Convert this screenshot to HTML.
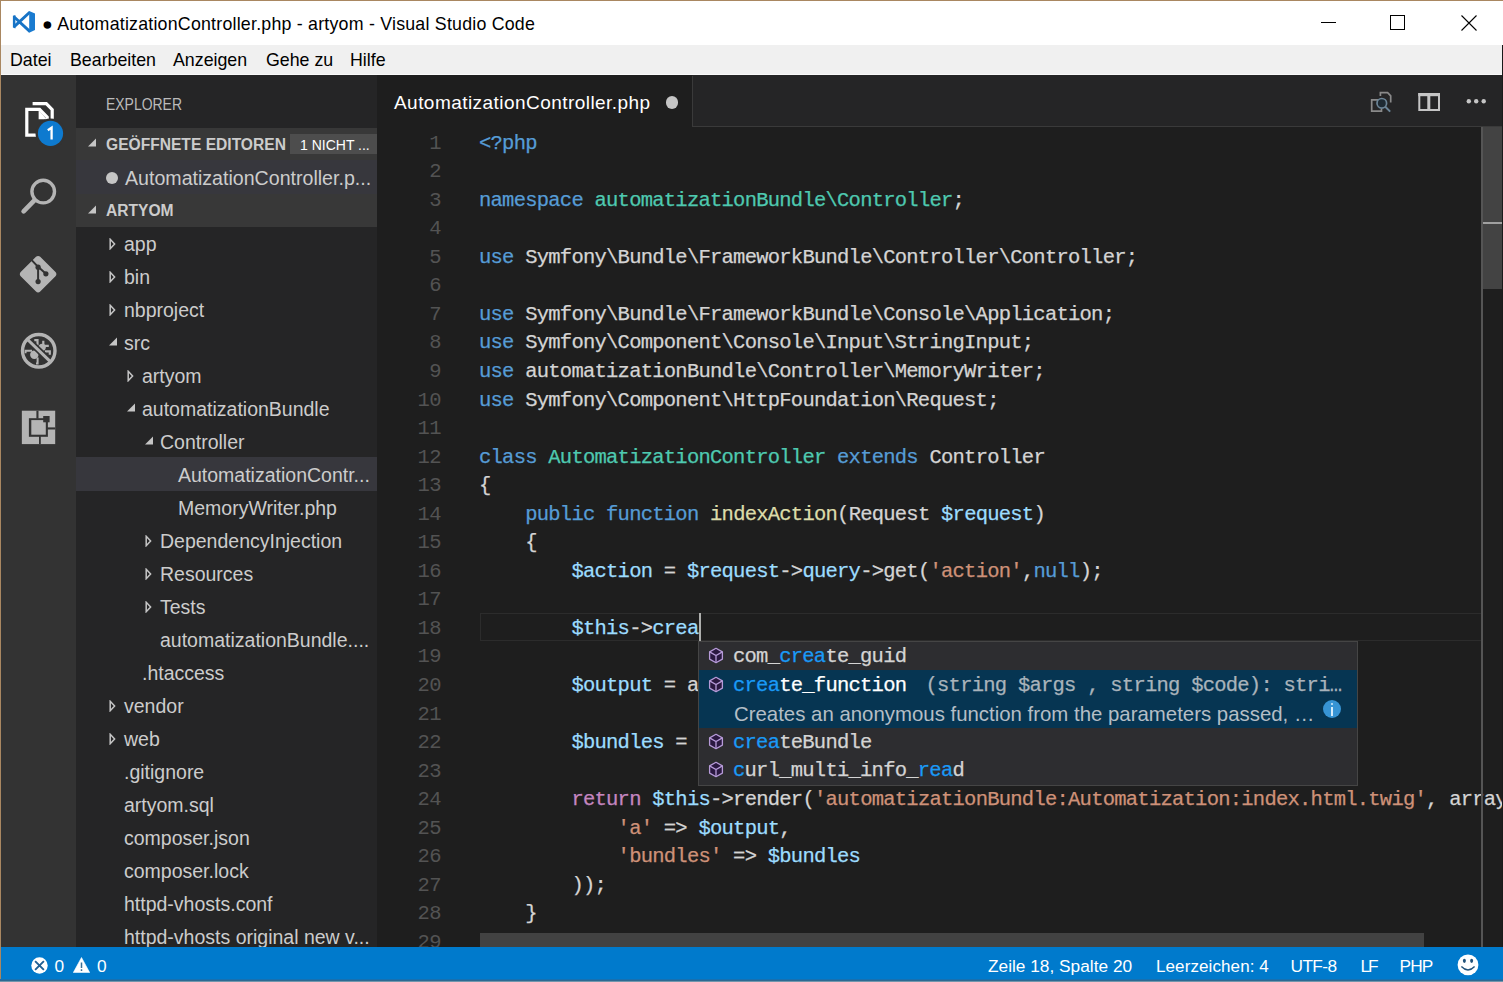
<!DOCTYPE html>
<html><head><meta charset="utf-8">
<style>
*{margin:0;padding:0;box-sizing:border-box}
html,body{width:1503px;height:982px;overflow:hidden;background:#1e1e1e}
body{position:relative;font-family:"Liberation Sans",sans-serif}
.a{position:absolute;white-space:pre;line-height:1}
#border-top{left:0;top:0;width:1503px;height:1px;background:#a98761}
#border-left{left:0;top:0;width:1px;height:982px;background:#a98761}
#titlebar{left:1px;top:1px;width:1502px;height:44px;background:#fff}
#menubar{left:1px;top:45px;width:1502px;height:29px;background:#f0f0f0}
#menuline{left:1px;top:74px;width:1502px;height:1px;background:#fafafa}
.title{font-size:17.8px;color:#000;letter-spacing:0.22px}
.menu{font-size:17.8px;color:#000;top:51.9px}
#activity{left:1px;top:75px;width:75px;height:872px;background:#333333}
#sidebar{left:76px;top:75px;width:301px;height:872px;background:#252526}
#editor{left:377px;top:75px;width:1125px;height:872px;background:#1e1e1e}
#tabbar{left:377px;top:75px;width:1125px;height:52px;background:#252526}
#tab{left:377px;top:75px;width:315px;height:52px;background:#1e1e1e}
#tabborder{left:692px;top:76px;width:1px;height:51px;background:#3a3a3a}
#tabline{left:693px;top:126px;width:809px;height:1px;background:#3a3a3a}
#statusbar{left:1px;top:947px;width:1502px;height:33px;background:#007acc}
#statusbottom{left:0;top:979px;width:1503px;height:3px;background:linear-gradient(#1770b0 0,#1770b0 1px,#2d6a92 1px,#2d6a92 2px,#7196ad 2px)}
.sb{font-size:17.5px;color:#fff;top:955px}
.sbtitle{font-size:16.2px;color:#bbbbbb;transform:scaleX(0.862);transform-origin:0 0}
.hdr{left:76px;width:301px;height:33px;background:#383838}
.hdrt{font-size:15.6px;font-weight:bold;color:#cccccc}
.item{font-size:19.5px;color:#cccccc;left:0;height:33px;line-height:33px}
.code{font-family:"Liberation Mono",monospace;font-size:20.5px;letter-spacing:-0.753px;color:#d4d4d4;line-height:28.54px;-webkit-text-stroke:0.25px currentColor}
.ln{font-family:"Liberation Mono",monospace;font-size:20.5px;letter-spacing:-0.753px;color:#535353;text-align:right;line-height:28.54px}
.k{color:#569cd6}.c{color:#4ec9b0}.f{color:#dcdcaa}.v{color:#9cdcfe}.s{color:#ce9178}.p{color:#c586c0}
</style></head><body>
<div class="a" id="border-top"></div>
<div class="a" id="border-left"></div>
<div class="a" id="titlebar"></div>
<div class="a" id="menubar"></div>
<div class="a" id="menuline"></div>

<!-- title -->
<svg class="a" style="left:0px;top:0px" width="40" height="40" viewBox="0 0 40 40">
<path d="M14.2 17 L30 31.6 M14.2 26.6 L30 12" stroke="#1773c6" stroke-width="2.9" fill="none"/>
<path d="M12.9 15.8 L15.4 15 L15.4 28.4 L12.9 27.6 Z" fill="#1773c6"/>
<path d="M29.2 10.9 L35 13.6 V30 L29.2 32.7 Z" fill="#1a7bd0"/>
</svg>
<div class="a title" style="left:42px;top:15.9px">● AutomatizationController.php - artyom - Visual Studio Code</div>
<div class="a" style="left:1321px;top:22px;width:15px;height:1px;background:#000"></div>
<div class="a" style="left:1390px;top:15px;width:15px;height:15px;border:1px solid #000"></div>
<svg class="a" style="left:1461px;top:15px" width="16" height="16" viewBox="0 0 16 16"><path d="M0.5 0.5 L15.5 15.5 M15.5 0.5 L0.5 15.5" stroke="#000" stroke-width="1.1"/></svg>

<!-- menu -->
<div class="a menu" style="left:10px">Datei</div>
<div class="a menu" style="left:70px">Bearbeiten</div>
<div class="a menu" style="left:173px">Anzeigen</div>
<div class="a menu" style="left:266px">Gehe zu</div>
<div class="a menu" style="left:350px">Hilfe</div>

<div class="a" id="activity"></div>
<div class="a" id="sidebar"></div>
<div class="a" id="editor"></div>
<div class="a" id="tabbar"></div>
<div class="a" id="tab"></div>
<div class="a" id="tabborder"></div>
<div class="a" id="tabline"></div>

<!-- ACTIVITY -->
<svg class="a" style="left:1px;top:75px" width="75" height="400" viewBox="1 75 75 400">
 <!-- explorer -->
 <path d="M32.6 103.6 H46.3 L52.2 109.6 V121" fill="none" stroke="#ffffff" stroke-width="3.2" stroke-linejoin="miter"/>
 <path d="M26.8 109.4 H39.6 L47.2 117.2 V135.1 H26.8 Z" fill="none" stroke="#ffffff" stroke-width="3.2" stroke-linejoin="miter"/>
 <path d="M38.6 110 V119.3 H46.6 Z" fill="#ffffff"/>
 <circle cx="50.5" cy="133.4" r="15" fill="#333333"/>
 <circle cx="50.5" cy="133.4" r="12.6" fill="#0e7acf"/>
 <path d="M47.8 130.2 L51.6 127.6 V139.6" fill="none" stroke="#ffffff" stroke-width="2.3"/>
 <!-- search -->
 <circle cx="43.2" cy="191.6" r="11.3" fill="none" stroke="#b4b4b4" stroke-width="3.4"/>
 <path d="M34.6 200.2 L23.6 211.4" stroke="#b4b4b4" stroke-width="4.6" stroke-linecap="round"/>
 <!-- git -->
 <path d="M38.1 255.9 Q39.3 255.9 40.2 256.8 L55.5 272.1 Q56.4 273.0 56.4 274.2 Q56.4 275.4 55.5 276.3 L40.2 291.6 Q39.3 292.5 38.1 292.5 Q36.9 292.5 36.0 291.6 L20.7 276.3 Q19.8 275.4 19.8 274.2 Q19.8 273.0 20.7 272.1 L36.0 256.8 Q36.9 255.9 38.1 255.9 Z" fill="#b4b4b4"/>
 <path d="M31.2 259.6 L38.1 266.8 V281.6 M38.1 266.8 L45.9 273.8" fill="none" stroke="#333333" stroke-width="2"/>
 <circle cx="38.1" cy="267.2" r="2.6" fill="#333333"/>
 <circle cx="45.9" cy="273.8" r="2.6" fill="#333333"/>
 <circle cx="38.1" cy="281.6" r="2.6" fill="#333333"/>
 <!-- debug -->
 <circle cx="34.3" cy="354.8" r="4.2" fill="#b4b4b4"/>
 <path d="M25.6 353.2 V350.7 H32" fill="none" stroke="#b4b4b4" stroke-width="1.9"/>
 <path d="M37.6 357.5 V363.4 H36" fill="none" stroke="#b4b4b4" stroke-width="2"/>
 <circle cx="42.2" cy="347.3" r="3.6" fill="#b4b4b4"/>
 <path d="M34.3 340.2 H37.5 V345.5 M43.3 340.7 V345 M44.2 345.8 H48.8 M44.9 351.4 H49.8 V354.8" fill="none" stroke="#b4b4b4" stroke-width="2.2"/>
 <path d="M26.6 338.6 L51.4 362.5" stroke="#333333" stroke-width="6.4"/>
 <circle cx="38.75" cy="350.75" r="16.25" fill="none" stroke="#b4b4b4" stroke-width="3.4"/>
 <path d="M27 339 L50.6 361.8" stroke="#b4b4b4" stroke-width="3.1"/>
 <!-- extensions -->
 <rect x="21.85" y="410.7" width="33.35" height="33.4" fill="#b4b4b4"/>
 <rect x="36.4" y="410.7" width="2.1" height="8" fill="#333333"/>
 <rect x="39" y="436" width="1.8" height="8.1" fill="#333333"/>
 <rect x="47" y="427.4" width="8.2" height="2.1" fill="#333333"/>
 <rect x="28.9" y="418.2" width="19" height="18.6" fill="#333333"/>
 <rect x="31.3" y="420.1" width="14.5" height="14.6" fill="#b4b4b4"/>
 <rect x="43.2" y="416" width="6.4" height="6.3" fill="#333333"/>
</svg>

<!-- SIDEBAR -->
<div class="a sbtitle" style="left:106px;top:96.1px">EXPLORER</div>
<div class="a hdr" style="top:128px;height:32px"></div>
<svg class="a" style="left:87px;top:138px" width="10" height="9" viewBox="0 0 10 9"><path d="M9 0.5 V8.5 H1 Z" fill="#c5c5c5"/></svg>
<div class="a hdrt" style="left:106px;top:136.8px">GEÖFFNETE EDITOREN</div>
<div class="a" style="left:290px;top:133.5px;width:87px;height:20.5px;background:#4d4d4d"></div>
<div class="a" style="left:300px;top:138.2px;font-size:14px;color:#ffffff">1 NICHT ...</div>
<div class="a" style="left:76px;top:160px;width:301px;height:33.5px;background:#37373d"></div>
<div class="a" style="left:106px;top:171.5px;width:12px;height:12px;border-radius:50%;background:#c5c5c5"></div>
<div class="a item" style="left:125px;top:161.5px;font-size:19.6px">AutomatizationController.p...</div>
<div class="a hdr" style="top:193.5px;height:33.5px"></div>
<svg class="a" style="left:87px;top:205px" width="10" height="9" viewBox="0 0 10 9"><path d="M9 0.5 V8.5 H1 Z" fill="#c5c5c5"/></svg>
<div class="a hdrt" style="left:106px;top:202.8px">ARTYOM</div>
<div class="a" style="left:76px;top:457px;width:301px;height:33.5px;background:#37373d"></div>
<svg class="a" style="left:109px;top:238px" width="7" height="12" viewBox="0 0 7 12"><path d="M1.2 1.3 L5.6 6 L1.2 10.7 Z" fill="none" stroke="#c5c5c5" stroke-width="1.5" stroke-linejoin="miter"/></svg>
<div class="a item" style="left:124px;top:228px">app</div>
<svg class="a" style="left:109px;top:271px" width="7" height="12" viewBox="0 0 7 12"><path d="M1.2 1.3 L5.6 6 L1.2 10.7 Z" fill="none" stroke="#c5c5c5" stroke-width="1.5" stroke-linejoin="miter"/></svg>
<div class="a item" style="left:124px;top:261px">bin</div>
<svg class="a" style="left:109px;top:304px" width="7" height="12" viewBox="0 0 7 12"><path d="M1.2 1.3 L5.6 6 L1.2 10.7 Z" fill="none" stroke="#c5c5c5" stroke-width="1.5" stroke-linejoin="miter"/></svg>
<div class="a item" style="left:124px;top:294px">nbproject</div>
<svg class="a" style="left:108px;top:337px" width="10" height="9" viewBox="0 0 10 9"><path d="M9 0.5 V8.5 H1 Z" fill="#c5c5c5"/></svg>
<div class="a item" style="left:124px;top:327px">src</div>
<svg class="a" style="left:127px;top:370px" width="7" height="12" viewBox="0 0 7 12"><path d="M1.2 1.3 L5.6 6 L1.2 10.7 Z" fill="none" stroke="#c5c5c5" stroke-width="1.5" stroke-linejoin="miter"/></svg>
<div class="a item" style="left:142px;top:360px">artyom</div>
<svg class="a" style="left:126px;top:403px" width="10" height="9" viewBox="0 0 10 9"><path d="M9 0.5 V8.5 H1 Z" fill="#c5c5c5"/></svg>
<div class="a item" style="left:142px;top:393px">automatizationBundle</div>
<svg class="a" style="left:144px;top:436px" width="10" height="9" viewBox="0 0 10 9"><path d="M9 0.5 V8.5 H1 Z" fill="#c5c5c5"/></svg>
<div class="a item" style="left:160px;top:426px">Controller</div>
<div class="a item" style="left:178px;top:459px">AutomatizationContr...</div>
<div class="a item" style="left:178px;top:492px">MemoryWriter.php</div>
<svg class="a" style="left:145px;top:535px" width="7" height="12" viewBox="0 0 7 12"><path d="M1.2 1.3 L5.6 6 L1.2 10.7 Z" fill="none" stroke="#c5c5c5" stroke-width="1.5" stroke-linejoin="miter"/></svg>
<div class="a item" style="left:160px;top:525px">DependencyInjection</div>
<svg class="a" style="left:145px;top:568px" width="7" height="12" viewBox="0 0 7 12"><path d="M1.2 1.3 L5.6 6 L1.2 10.7 Z" fill="none" stroke="#c5c5c5" stroke-width="1.5" stroke-linejoin="miter"/></svg>
<div class="a item" style="left:160px;top:558px">Resources</div>
<svg class="a" style="left:145px;top:601px" width="7" height="12" viewBox="0 0 7 12"><path d="M1.2 1.3 L5.6 6 L1.2 10.7 Z" fill="none" stroke="#c5c5c5" stroke-width="1.5" stroke-linejoin="miter"/></svg>
<div class="a item" style="left:160px;top:591px">Tests</div>
<div class="a item" style="left:160px;top:624px">automatizationBundle....</div>
<div class="a item" style="left:142px;top:657px">.htaccess</div>
<svg class="a" style="left:109px;top:700px" width="7" height="12" viewBox="0 0 7 12"><path d="M1.2 1.3 L5.6 6 L1.2 10.7 Z" fill="none" stroke="#c5c5c5" stroke-width="1.5" stroke-linejoin="miter"/></svg>
<div class="a item" style="left:124px;top:690px">vendor</div>
<svg class="a" style="left:109px;top:733px" width="7" height="12" viewBox="0 0 7 12"><path d="M1.2 1.3 L5.6 6 L1.2 10.7 Z" fill="none" stroke="#c5c5c5" stroke-width="1.5" stroke-linejoin="miter"/></svg>
<div class="a item" style="left:124px;top:723px">web</div>
<div class="a item" style="left:124px;top:756px">.gitignore</div>
<div class="a item" style="left:124px;top:789px">artyom.sql</div>
<div class="a item" style="left:124px;top:822px">composer.json</div>
<div class="a item" style="left:124px;top:855px">composer.lock</div>
<div class="a item" style="left:124px;top:888px">httpd-vhosts.conf</div>
<div class="a item" style="left:124px;top:921px">httpd-vhosts original new v...</div>

<!-- EDITOR -->
<div class="a" style="left:480px;top:613px;width:1001px;height:27.5px;border:1.5px solid #2c2c2c;border-right:none"></div>
<div class="a ln" style="left:377px;top:129.6px;width:63.7px">1
2
3
4
5
6
7
8
9
10
11
12
13
14
15
16
17
18
19
20
21
22
23
24
25
26
27
28
29</div>
<div class="a code" style="left:479px;top:129.6px"><span class="k">&lt;?php</span>

<span class="k">namespace</span> <span class="c">automatizationBundle\Controller</span>;

<span class="k">use</span> Symfony\Bundle\FrameworkBundle\Controller\Controller;

<span class="k">use</span> Symfony\Bundle\FrameworkBundle\Console\Application;
<span class="k">use</span> Symfony\Component\Console\Input\StringInput;
<span class="k">use</span> automatizationBundle\Controller\MemoryWriter;
<span class="k">use</span> Symfony\Component\HttpFoundation\Request;

<span class="k">class</span> <span class="c">AutomatizationController</span> <span class="k">extends</span> Controller
{
    <span class="k">public</span> <span class="k">function</span> <span class="f">indexAction</span>(Request <span class="v">$request</span>)
    {
        <span class="v">$action</span> = <span class="v">$request</span>-&gt;<span class="v">query</span>-&gt;get(<span class="s">'action'</span>,<span class="k">null</span>);

        <span class="v">$this</span>-&gt;<span class="v">crea</span>

        <span class="v">$output</span> = a

        <span class="v">$bundles</span> =

        <span class="p">return</span> <span class="v">$this</span>-&gt;render(<span class="s">'automatizationBundle:Automatization:index.html.twig'</span>, array
            <span class="s">'a'</span> =&gt; <span class="v">$output</span>,
            <span class="s">'bundles'</span> =&gt; <span class="v">$bundles</span>
        ));
    }
</div>
<div class="a" style="left:699px;top:613px;width:2px;height:28px;background:#aeafad"></div>
<!-- tab -->
<div class="a" style="left:394px;top:93.4px;font-size:19px;letter-spacing:0.45px;color:#ffffff">AutomatizationController.php</div>
<div class="a" style="left:665.5px;top:96px;width:12.5px;height:12.5px;border-radius:50%;background:#c5c5c5"></div>

<!-- editor actions -->
<svg class="a" style="left:1360px;top:85px" width="140" height="35" viewBox="1360 85 140 35">
 <path d="M1380.4 96 V92.7 H1387.6 L1390.7 95.8 V102.5" fill="none" stroke="#8a8a8a" stroke-width="1.7"/>
 <path d="M1378 99.8 H1371.7 V111.2 H1381.5 V108.5" fill="none" stroke="#8a8a8a" stroke-width="1.7"/>
 <circle cx="1381.8" cy="103.3" r="4.8" fill="#1e2a33" stroke="#6c8597" stroke-width="1.7"/>
 <path d="M1385.3 106.8 L1390.2 111.6" stroke="#6c8597" stroke-width="2"/>
 <rect x="1419.3" y="94" width="19.7" height="16" fill="none" stroke="#c5c5c5" stroke-width="2"/>
 <rect x="1418.3" y="93" width="21.7" height="3.2" fill="#c5c5c5"/>
 <rect x="1427.3" y="93" width="3" height="18" fill="#c5c5c5"/>
 <circle cx="1468.8" cy="101.2" r="2.2" fill="#c5c5c5"/>
 <circle cx="1476.2" cy="101.2" r="2.2" fill="#c5c5c5"/>
 <circle cx="1483.7" cy="101.2" r="2.2" fill="#c5c5c5"/>
</svg>
<!-- scrollbars -->
<div class="a" style="left:1481px;top:127px;width:2px;height:820px;background:#555555"></div>
<div class="a" style="left:1483px;top:127px;width:20px;height:162px;background:#434343"></div>
<div class="a" style="left:1483px;top:222px;width:20px;height:2px;background:#a0a0a0"></div>
<div class="a" style="left:1502px;top:45px;width:1px;height:937px;background:#1a1a1a"></div>
<div class="a" style="left:480px;top:933px;width:944px;height:14px;background:#424242"></div>
<!-- SUGGEST -->
<div class="a" style="left:698px;top:640.5px;width:660px;height:145px;background:#2d2d30;border:1px solid #454545"></div>
<div class="a" style="left:699px;top:670px;width:658px;height:58px;background:#063552"></div>
<svg class="a" style="left:707.6px;top:646.8px" width="16" height="17" viewBox="-8 -8.5 16 17"><path d="M0 -7.2 L6.4 -3.6 V3.6 L0 7.2 L-6.4 3.6 V-3.6 Z" fill="#2a1840" stroke="#b69ad8" stroke-width="1.3" stroke-linejoin="round"/><path d="M-6.4 -3.6 L0 0 L6.4 -3.6 M0 0 V7.2" fill="none" stroke="#b69ad8" stroke-width="1.3"/></svg>
<svg class="a" style="left:707.6px;top:675.5px" width="16" height="17" viewBox="-8 -8.5 16 17"><path d="M0 -7.2 L6.4 -3.6 V3.6 L0 7.2 L-6.4 3.6 V-3.6 Z" fill="#2a1840" stroke="#b69ad8" stroke-width="1.3" stroke-linejoin="round"/><path d="M-6.4 -3.6 L0 0 L6.4 -3.6 M0 0 V7.2" fill="none" stroke="#b69ad8" stroke-width="1.3"/></svg>
<svg class="a" style="left:707.6px;top:733.1px" width="16" height="17" viewBox="-8 -8.5 16 17"><path d="M0 -7.2 L6.4 -3.6 V3.6 L0 7.2 L-6.4 3.6 V-3.6 Z" fill="#2a1840" stroke="#b69ad8" stroke-width="1.3" stroke-linejoin="round"/><path d="M-6.4 -3.6 L0 0 L6.4 -3.6 M0 0 V7.2" fill="none" stroke="#b69ad8" stroke-width="1.3"/></svg>
<svg class="a" style="left:707.6px;top:761.4px" width="16" height="17" viewBox="-8 -8.5 16 17"><path d="M0 -7.2 L6.4 -3.6 V3.6 L0 7.2 L-6.4 3.6 V-3.6 Z" fill="#2a1840" stroke="#b69ad8" stroke-width="1.3" stroke-linejoin="round"/><path d="M-6.4 -3.6 L0 0 L6.4 -3.6 M0 0 V7.2" fill="none" stroke="#b69ad8" stroke-width="1.3"/></svg>
<div class="a code" style="left:733px;top:643.19px"><span style="color:#d4d4d4">com_</span><span style="color:#1a9af7">crea</span><span style="color:#d4d4d4">te_guid</span></div>
<div class="a code" style="left:733px;top:672.09px"><span style="color:#1a9af7">crea</span><span style="color:#ffffff">te_function</span></div>
<div class="a code" style="left:733px;top:728.99px"><span style="color:#1a9af7">crea</span><span style="color:#d4d4d4">teBundle</span></div>
<div class="a code" style="left:733px;top:756.99px"><span style="color:#1a9af7">c</span><span style="color:#d4d4d4">url_multi_info_</span><span style="color:#1a9af7">rea</span><span style="color:#d4d4d4">d</span></div>
<div class="a code" style="left:925.5px;top:672.09px;color:#a9b3bb">(string $args , string $code): stri…</div>
<div class="a" style="left:734px;top:704.3px;font-size:20.4px;color:#b4bec6">Creates an anonymous function from the parameters passed, …</div>
<div class="a" style="left:1322.7px;top:700.3px;width:18px;height:18px;border-radius:50%;background:#3794d4"></div>
<div class="a" style="left:1330.7px;top:703px;width:2.2px;height:2.2px;background:#d6ecfa;border-radius:1px"></div>
<div class="a" style="left:1330.7px;top:706.5px;width:2.2px;height:9px;background:#d6ecfa"></div>

<div class="a" id="statusbar"></div>
<div class="a" id="statusbottom"></div>
<!-- STATUS -->
<svg class="a" style="left:30.5px;top:956.8px" width="17" height="17" viewBox="0 0 17 17"><circle cx="8.5" cy="8.5" r="8.2" fill="#ffffff"/><path d="M4.1 4.1 L12.9 12.9 M12.9 4.1 L4.1 12.9" stroke="#1f5f93" stroke-width="1.9"/></svg>
<div class="a sb" style="left:54.5px;top:957.66px;font-size:17.3px">0</div>
<svg class="a" style="left:72.5px;top:956.8px" width="17" height="16" viewBox="0 0 17 16"><path d="M8.5 0.5 L16.7 15.6 H0.3 Z" fill="#ffffff" stroke="#ffffff" stroke-width="0.6" stroke-linejoin="round"/><path d="M8.5 5.5 V11 M8.5 12.3 V14" stroke="#3a6f96" stroke-width="1.5"/></svg>
<div class="a sb" style="left:97px;top:957.66px;font-size:17.3px">0</div>
<div class="a sb" style="left:988px;top:957.66px;font-size:17.3px">Zeile 18, Spalte 20</div>
<div class="a sb" style="left:1156px;top:957.66px;font-size:17px;letter-spacing:0.1px">Leerzeichen: 4</div>
<div class="a sb" style="left:1290.5px;top:957.66px;font-size:17.3px;letter-spacing:-0.6px">UTF-8</div>
<div class="a sb" style="left:1360.5px;top:957.66px;font-size:17.3px;letter-spacing:-2px">LF</div>
<div class="a sb" style="left:1399.5px;top:957.66px;font-size:17.3px;letter-spacing:-0.9px">PHP</div>
<svg class="a" style="left:1457px;top:953.5px" width="23" height="22" viewBox="0 0 23 22"><circle cx="11" cy="10.9" r="10.4" fill="#ffffff"/><ellipse cx="7.4" cy="6.8" rx="1.5" ry="2.1" fill="#22527a"/><ellipse cx="14.6" cy="6.8" rx="1.5" ry="2.1" fill="#22527a"/><path d="M4.4 12.6 Q11 19.5 17.6 12.6" fill="none" stroke="#22527a" stroke-width="1.4"/></svg>
</body></html>
